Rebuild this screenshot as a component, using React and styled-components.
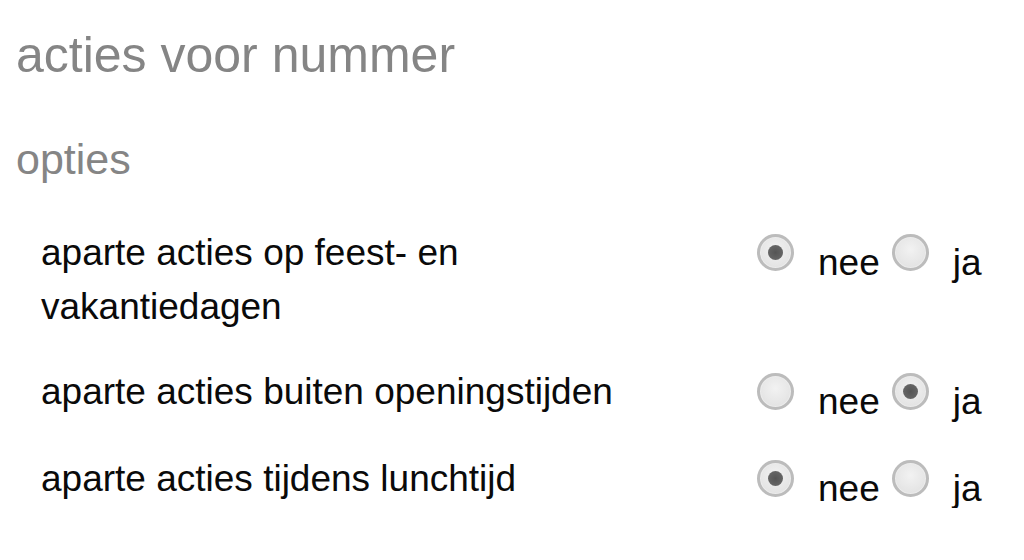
import React from 'react'
import styled, { createGlobalStyle } from 'styled-components'

const GlobalStyle = createGlobalStyle`
body {
    margin: 0;
    background: #fff;
    font-family: "Liberation Sans", Arial, sans-serif;
}
`;

const options = [
    { label: 'aparte acties op feest- en vakantiedagen', value: 'nee' },
    { label: 'aparte acties buiten openingstijden', value: 'ja' },
    { label: 'aparte acties tijdens lunchtijd', value: 'nee' },
]

function Radio({ checked, text }) {
    return (
        <Option>
            <Circle>{checked && <Dot />}</Circle>
            <OptionText>{text}</OptionText>
        </Option>
    )
}

export default function App() {
    return (
        <Page>
            <GlobalStyle />
            <Title>acties voor nummer</Title>
            <SubTitle>opties</SubTitle>
            <List>
                {options.map(o => (
                    <Row key={o.label}>
                        <Label>{o.label}</Label>
                        <RadioGroup>
                            <Radio checked={o.value === 'nee'} text="nee" />
                            <Radio checked={o.value === 'ja'} text="ja" />
                        </RadioGroup>
                    </Row>
                ))}
            </List>
        </Page>
    )
}

const Page = styled.div`
padding: 27px 0 0 16px;
`;

const Title = styled.h1`
margin: 0;
font-size: 50px;
line-height: 57px;
font-weight: normal;
color: #858585;
`;

const SubTitle = styled.h2`
margin: 51px 0 0;
font-size: 43px;
line-height: 49px;
font-weight: normal;
color: #858585;
`;

const List = styled.div`
margin-top: 42px;
padding-left: 25px;
display: flex;
flex-direction: column;
gap: 31px;
`;

const Row = styled.div`
display: grid;
grid-template-columns: 716px auto;
align-items: start;
`;

const Label = styled.div`
max-width: 620px;
font-size: 37px;
line-height: 54px;
color: #0a0a0a;
`;

const RadioGroup = styled.div`
display: flex;
align-items: flex-start;
margin-top: 10px;
`;

const Option = styled.label`
display: flex;
align-items: flex-start;
`;

const Circle = styled.span`
width: 37px;
height: 37px;
margin-top: -2px;
box-sizing: border-box;
border-radius: 50%;
border: 3px solid #bcbcbc;
background: radial-gradient(circle at 50% 40%, #f2f2f2 0%, #e4e4e4 70%, #d8d8d8 100%);
box-shadow: inset 0 0 0 1px #ececec;
display: flex;
align-items: center;
justify-content: center;
`;

const Dot = styled.span`
width: 15px;
height: 15px;
border-radius: 50%;
background: radial-gradient(circle, #555 0%, #636363 60%, #777 100%);
`;

const OptionText = styled.span`
font-size: 37px;
line-height: 39px;
padding-top: 7px;
margin: 0 12px 0 24px;
color: #0a0a0a;
`;
